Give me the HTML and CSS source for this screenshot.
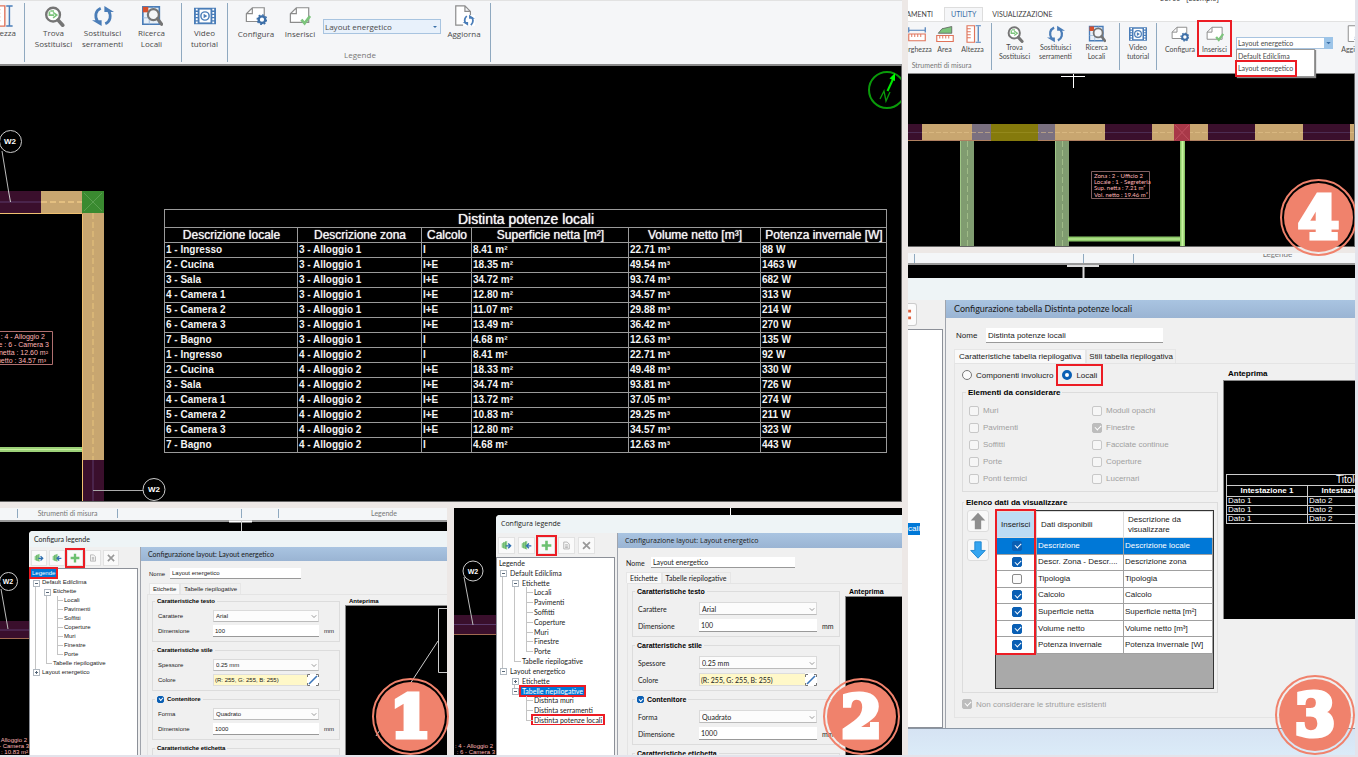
FILE: index.html
```html
<!DOCTYPE html>
<html lang="it">
<head>
<meta charset="utf-8">
<title>Distinta potenze locali</title>
<link rel="stylesheet" href="styles.css">
</head>
<body>
<svg class="defs" aria-hidden="true">
  <symbol id="i-find" viewBox="0 0 24 24"><circle cx="11" cy="10.500" r="7.500" fill="#fff" stroke="#757575" stroke-width="2.600"/><path d="M16.500 16.500l5 5.500" stroke="#757575" stroke-width="4" stroke-linecap="round"/><path d="M7 7v4h5M11 8l4 3-4 3M8 6.500h4" fill="none" stroke="#7cc47c" stroke-width="1.800"/></symbol>
  <symbol id="i-swap" viewBox="0 0 24 24"><path d="M9.500 3.500C4 6 2.500 12 6 18" fill="none" stroke="#4a7db8" stroke-width="3"/><path d="M0 16.500h10.500v6.500z" fill="#4a7db8"/><path d="M14.500 20.500C20 18 21.500 12 18 6" fill="none" stroke="#4a7db8" stroke-width="3"/><path d="M24 7.500h-10.500V1z" fill="#4a7db8"/></symbol>
  <symbol id="i-room" viewBox="0 0 24 24"><path d="M2 2h18v19H2z" fill="#e8f0f8" stroke="#4a7db8" stroke-width="1.800"/><path d="M2 14h7v7M14 2v5" fill="none" stroke="#9ab8d8"/><path d="M2 2h6v6H2z" fill="#d8502c"/><circle cx="13.500" cy="10.500" r="6" fill="#f4f6f8" stroke="#757575" stroke-width="2.400"/><path d="M18 15l4.500 6" stroke="#757575" stroke-width="3.500" stroke-linecap="round"/></symbol>
  <symbol id="i-video" viewBox="0 0 24 24"><path d="M0 3h24v18H0z" fill="#4a7db8"/><path d="M6 5h12v14H6z" fill="#fff"/><path d="M3 4v16M21 4v16" stroke="#fff" stroke-width="2" stroke-dasharray="2 1.500"/><circle cx="12" cy="12" r="4.500" fill="#fff" stroke="#4a7db8" stroke-width="1.600"/><path d="M10.500 9.500v5l4-2.500z" fill="#4a7db8"/></symbol>
  <symbol id="i-conf" viewBox="0 0 24 24"><path d="M8 3h13v15H1.500V9.500zM8 3v6.500H1.500" fill="#fff" stroke="#8c8c8c" stroke-width="1.300"/><circle cx="18.500" cy="16" r="3.600" fill="#fff" stroke="#3d6fa8" stroke-width="2.600"/><circle cx="18.500" cy="16" r="5.200" fill="none" stroke="#3d6fa8" stroke-width="1.500" stroke-dasharray="2 2"/></symbol>
  <symbol id="i-ins" viewBox="0 0 24 24"><path d="M8 3h13.500v16H1.500V9.500zM8 3v6.500H1.500" fill="#fff" stroke="#8c8c8c" stroke-width="1.300"/><path d="M13.500 16l3.500 4 6-8" fill="none" stroke="#7cc47c" stroke-width="3"/></symbol>
  <symbol id="i-upd" viewBox="0 0 24 24"><path d="M3 1h10l6 6v15H3zM13 1v6h6" fill="#fff" stroke="#8c8c8c" stroke-width="1.300"/><path d="M11 11h13v12H11z" fill="#fff"/><path d="M15 12q-4 4-1 8M19.500 22q4-4 1-8.500" fill="none" stroke="#4a7db8" stroke-width="1.900"/><path d="M10.500 18.500h6v4zM24 15h-6.500v-4.500z" fill="#4a7db8"/></symbol>
  <symbol id="i-alt" viewBox="0 0 24 24"><path d="M4 1h10v22H4z" fill="#fff" stroke="#e0735a" stroke-width="1.500"/><path d="M4 5h5M4 9h5M4 13h5M4 17h5" stroke="#e0735a" stroke-width="1.300"/><path d="M19 2v20M15.500 1h7M15.500 23h7" stroke="#4a7db8" stroke-width="1.600"/></symbol>
  <symbol id="i-area" viewBox="0 0 24 24"><path d="M3 11l5-6 13-3v9z" fill="#7cc47c" stroke="#555" stroke-width="1"/><path d="M1 14h22v8H1z" fill="#fff" stroke="#e0735a" stroke-width="1.500"/><path d="M5 14v4M9 14v4M13 14v4M17 14v4" stroke="#e0735a" stroke-width="1.300"/></symbol>
  <symbol id="i-len" viewBox="0 0 24 24"><path d="M1 7h22M1 3v7M23 3v7" stroke="#4a7db8" stroke-width="1.600"/><path d="M1 12h22v9H1z" fill="#fff" stroke="#e0735a" stroke-width="1.500"/><path d="M5 12v4M9 12v4M13 12v4M17 12v4" stroke="#e0735a" stroke-width="1.300"/></symbol>
  <symbol id="i-out" viewBox="0 0 16 16"><path d="M1 5l8-4v13l-8-3z" fill="#8fd08f"/><path d="M4 3v9M6.500 2v11" stroke="#5aa85a"/><path d="M7 8.500h7M10.500 5l3.500 3.500-3.500 3.500" fill="none" stroke="#2f6fb0" stroke-width="2"/></symbol>
  <symbol id="i-in" viewBox="0 0 16 16"><path d="M1 5l8-4v13l-8-3z" fill="#8fd08f"/><path d="M4 3v9M6.500 2v11" stroke="#5aa85a"/><path d="M8 8.500h7M11.500 5L8 8.500l3.500 3.500" fill="none" stroke="#2f6fb0" stroke-width="2"/></symbol>
  <symbol id="i-plus" viewBox="0 0 16 16"><path d="M8 1v14M1 8h14" stroke="#6cc070" stroke-width="3.800"/></symbol>
  <symbol id="i-copy" viewBox="0 0 16 16"><path d="M4 3h5l3 3v7H4zM6 7h4M6 9h4M6 11h4" fill="none" stroke="#b4b4b4" stroke-width="1.400"/></symbol>
  <symbol id="i-x" viewBox="0 0 16 16"><path d="M3 3l10 10M13 3L3 13" stroke="#9a9a9a" stroke-width="2.600"/></symbol>
  <symbol id="i-chev" viewBox="0 0 8 8"><path d="M1 3l3 3 3-3" fill="none" stroke="#777"/></symbol>
  <symbol id="i-tri" viewBox="0 0 8 8"><path d="M2 3h4L4 5z" fill="#3a70a8"/></symbol>
  <symbol id="i-pen" viewBox="0 0 12 12"><path d="M0 0h12v12H0z" fill="#fff"/><path d="M2 10L10 2" stroke="#3a74b8" stroke-width="1.600"/><path d="M.5 3V.5H3M11.500 9v2.500H9M9 .5h2.500V3M.5 9v2.500H3" fill="none" stroke="#777"/></symbol>
</svg>

<main class="board">
  <div class="left">
    <section class="panel panel-main">
      <div class="screen">
        <div class="ribbon">
          <div class="group cut"><button><svg><use href="#i-alt"/></svg>Altezza</button></div>
          <div class="group tools">
            <button><svg><use href="#i-find"/></svg>Trova<br>Sostituisci</button>
            <button><svg><use href="#i-swap"/></svg>Sostituisci<br>serramenti</button>
            <button><svg><use href="#i-room"/></svg>Ricerca<br>Locali</button>
          </div>
          <div class="group video"><button><svg><use href="#i-video"/></svg>Video<br>tutorial</button></div>
          <div class="group legends">
            <div class="row">
              <button class="low"><svg><use href="#i-conf"/></svg>Configura</button>
              <button class="low"><svg><use href="#i-ins"/></svg>Inserisci</button>
              <span class="combo rib-combo"><select aria-label="Layout"><option>Layout energetico</option></select><svg><use href="#i-tri"/></svg></span>
              <button class="low"><svg><use href="#i-upd"/></svg>Aggiorna</button>
            </div>
            <span class="caption">Legende</span>
          </div>
        </div>
        <div class="cad cad-main">
          <svg class="drawing"><g transform="translate(0 -66)">
            <path d="M2 151L9 194" stroke="#bbb"/>
            <rect y="191" width="41" height="22" fill="#3a0f2c"/><path d="M0 202h41" stroke="#5a3a6a"/><path d="M8.500 191l2 11" stroke="#ccc"/>
            <rect x="41" y="191" width="41" height="22" fill="#c8a670"/><path d="M41 202h41" stroke="#ffd890" stroke-dasharray="6 3"/>
            <path d="M0 213.500h82.500V501" fill="none" stroke="#f0c070"/>
            <rect x="83" y="213" width="21" height="247" fill="#c8a670"/><path d="M93 213V460" stroke="#e8c47c" stroke-dasharray="6 3"/>
            <rect x="82" y="191" width="22" height="22" fill="#3a8a30"/><path d="M84 193l18 18M102 193l-18 18" stroke="#5aa050"/>
            <rect x="83" y="460" width="21" height="42" fill="#3a0f2c"/><path d="M93 460v41" stroke="#5a3a6a"/>
            <path d="M0 449.500h82" stroke="#9cd078" stroke-width="5"/><path d="M0 449.500h82" stroke="#c8f0a0"/>
            <path d="M93 490.500h50" stroke="#aaa"/>
            <circle cx="10.500" cy="141.500" r="11" class="ring"/><circle cx="154" cy="489.500" r="11" class="ring"/>
            <text x="10" y="144" class="w2">W2</text><text x="154" y="492" class="w2">W2</text>
            <path d="M0 331.500h52.500v33H0" fill="none" stroke="#b07070"/>
            <g class="tag tag-end"><text x="45" y="339">Zona : 4 - Alloggio 2</text><text x="49" y="347">Locale : 6 - Camera 3</text><text x="48" y="355">Sup. netta : 12.60 m²</text><text x="46" y="363">Vol. netto : 34.57 m³</text></g>
          </g></svg>
          <svg class="compass" viewBox="0 0 34 42"><circle cx="20" cy="21" r="18" fill="none" stroke="#0a9a0a" stroke-width="2"/><path d="M20.500 22L27 8" stroke="#00e800" stroke-width="2"/><path d="M28 4l-5.500 5.500 5.500 2.500z" fill="#00ff00"/><path d="M13 30l4-8 2 10 4-9" fill="none" stroke="#0a9a0a" stroke-width="1.300"/></svg>
          <table class="rooms">
            <colgroup><col class="c1"><col class="c2"><col class="c3"><col class="c4"><col class="c5"><col class="c6"></colgroup>
            <thead>
              <tr class="title"><th colspan="6">Distinta potenze locali</th></tr>
              <tr><th>Descrizione locale</th><th>Descrizione zona</th><th>Calcolo</th><th>Superficie netta [m²]</th><th>Volume netto [m³]</th><th>Potenza invernale [W]</th></tr>
            </thead>
            <tbody>
              <tr><td>1 - Ingresso</td><td>3 - Alloggio 1</td><td>I</td><td>8.41 m²</td><td>22.71 m³</td><td>88 W</td></tr>
              <tr><td>2 - Cucina</td><td>3 - Alloggio 1</td><td>I+E</td><td>18.35 m²</td><td>49.54 m³</td><td>1463 W</td></tr>
              <tr><td>3 - Sala</td><td>3 - Alloggio 1</td><td>I+E</td><td>34.72 m²</td><td>93.74 m³</td><td>682 W</td></tr>
              <tr><td>4 - Camera 1</td><td>3 - Alloggio 1</td><td>I+E</td><td>12.80 m²</td><td>34.57 m³</td><td>313 W</td></tr>
              <tr><td>5 - Camera 2</td><td>3 - Alloggio 1</td><td>I+E</td><td>11.07 m²</td><td>29.88 m³</td><td>214 W</td></tr>
              <tr><td>6 - Camera 3</td><td>3 - Alloggio 1</td><td>I+E</td><td>13.49 m²</td><td>36.42 m³</td><td>270 W</td></tr>
              <tr><td>7 - Bagno</td><td>3 - Alloggio 1</td><td>I</td><td>4.68 m²</td><td>12.63 m³</td><td>135 W</td></tr>
              <tr><td>1 - Ingresso</td><td>4 - Alloggio 2</td><td>I</td><td>8.41 m²</td><td>22.71 m³</td><td>92 W</td></tr>
              <tr><td>2 - Cucina</td><td>4 - Alloggio 2</td><td>I+E</td><td>18.33 m²</td><td>49.48 m³</td><td>330 W</td></tr>
              <tr><td>3 - Sala</td><td>4 - Alloggio 2</td><td>I+E</td><td>34.74 m²</td><td>93.81 m³</td><td>726 W</td></tr>
              <tr><td>4 - Camera 1</td><td>4 - Alloggio 2</td><td>I+E</td><td>13.72 m²</td><td>37.05 m³</td><td>274 W</td></tr>
              <tr><td>5 - Camera 2</td><td>4 - Alloggio 2</td><td>I+E</td><td>10.83 m²</td><td>29.25 m³</td><td>211 W</td></tr>
              <tr><td>6 - Camera 3</td><td>4 - Alloggio 2</td><td>I+E</td><td>12.80 m²</td><td>34.57 m³</td><td>323 W</td></tr>
              <tr><td>7 - Bagno</td><td>4 - Alloggio 2</td><td>I</td><td>4.68 m²</td><td>12.63 m³</td><td>443 W</td></tr>
            </tbody>
          </table>
        </div>
      </div>
    </section>

    <div class="steps">
      <section class="panel">
        <div class="screen step step-1">
          <div class="strip"><span class="s-0"></span><span class="s-a">Strumenti di misura</span><span class="s-b"></span><span class="s-c"></span><span class="s-d">Legende</span></div>
          <svg class="drawing"><g transform="translate(0 -508)">
            <path d="M229 521.500h23" stroke="#fff" stroke-width="2"/><path d="M241.500 521v10" stroke="#ccc"/>
            <rect y="621" width="29" height="17" fill="#3a0f2c"/><path d="M0 630h29" stroke="#5a3a6a"/><path d="M0 638.500h29" stroke="#a06a50"/>
            <path d="M1 589l7 40" stroke="#bbb"/><circle cx="8.500" cy="581.500" r="9" class="ring"/><text x="8" y="584" class="w2 small">W2</text>
            <g class="tag tag-end"><text x="27" y="742">4 - Alloggio 2</text><text x="29" y="748">- Camera 3</text><text x="28" y="754">: 10.83 m²</text></g>
          </g></svg>
          <div class="dialog">
            <header>Configura legende</header>
            <div class="cols">
              <div class="side">
                <div class="bar"><button aria-label="Esporta"><svg><use href="#i-out"/></svg></button><button aria-label="Importa"><svg><use href="#i-in"/></svg></button><button class="mark" aria-label="Aggiungi"><svg><use href="#i-plus"/></svg></button><button aria-label="Copia"><svg><use href="#i-copy"/></svg></button><button aria-label="Elimina"><svg><use href="#i-x"/></svg></button></div>
                <ul class="tree">
                  <li><b class="sel mark">Legende</b></li>
                  <li><i class="m first"></i>Default Edilclima</li>
                  <li><i class="v"></i><i class="m first"></i>Etichette</li>
                  <li><i class="v"></i><i class="v"></i><i class="t"></i>Locali</li>
                  <li><i class="v"></i><i class="v"></i><i class="t"></i>Pavimenti</li>
                  <li><i class="v"></i><i class="v"></i><i class="t"></i>Soffitti</li>
                  <li><i class="v"></i><i class="v"></i><i class="t"></i>Coperture</li>
                  <li><i class="v"></i><i class="v"></i><i class="t"></i>Muri</li>
                  <li><i class="v"></i><i class="v"></i><i class="t"></i>Finestre</li>
                  <li><i class="v"></i><i class="v"></i><i class="e"></i>Porte</li>
                  <li><i class="v"></i><i class="e"></i>Tabelle riepilogative</li>
                  <li><i class="p last"></i>Layout energetico</li>
                </ul>
              </div>
              <div class="work">
                <h2>Configurazione layout: Layout energetico</h2>
                <form>
                  <label class="name">Nome <input value="Layout energetico"></label>
                  <div class="tabs"><button type="button" class="on">Etichette</button><button type="button">Tabelle riepilogative</button></div>
                  <div class="page">
                    <div class="sets">
                      <fieldset><legend>Caratteristiche testo</legend>
                        <label for="a1">Carattere</label><span class="combo"><select id="a1"><option>Arial</option></select><svg><use href="#i-chev"/></svg></span><span></span>
                        <label for="a2">Dimensione</label><input id="a2" value="100"><span>mm</span></fieldset>
                      <fieldset><legend>Caratteristiche stile</legend>
                        <label for="a3">Spessore</label><span class="combo"><select id="a3"><option>0.25 mm</option></select><svg><use href="#i-chev"/></svg></span><span></span>
                        <label for="a4">Colore</label><span class="color"><input id="a4" value="(R: 255, G: 255, B: 255)"><button type="button" aria-label="Scegli colore"><svg viewBox="0 0 12 12"><use href="#i-pen"/></svg></button></span><span></span></fieldset>
                      <fieldset><legend><label><input type="checkbox" checked> Contenitore</label></legend>
                        <label for="a5">Forma</label><span class="combo"><select id="a5"><option>Quadrato</option></select><svg><use href="#i-chev"/></svg></span><span></span>
                        <label for="a6">Dimensione</label><input id="a6" value="1000"><span>mm</span></fieldset>
                      <fieldset><legend>Caratteristiche etichetta</legend><span></span></fieldset>
                    </div>
                    <div class="preview"><h3>Anteprima</h3><div class="black"><svg><path d="M102 2.500H92.500v64H102M92 35L30 130" fill="none" stroke="#ccc"/></svg></div></div>
                  </div>
                </form>
              </div>
            </div>
          </div>
        </div>
        <span class="badge b1">1</span>
      </section>

      <section class="panel">
        <div class="screen step step-2">
          <svg class="drawing"><g transform="translate(-454 -508)">
            <path d="M730.500 508v8" stroke="#fff"/>
            <rect x="454" y="615" width="43" height="19" fill="#3a0f2c"/><path d="M454 624.500h43" stroke="#5a3a6a"/><path d="M454 634.500h43" stroke="#a06a50"/>
            <path d="M464 577l9 48" stroke="#bbb"/><circle cx="473" cy="571" r="10" class="ring"/><text x="473" y="574" class="w2 small">W2</text>
            <g class="tag tag-end"><text x="493" y="748">: 4 - Alloggio 2</text><text x="495" y="754">: 6 - Camera 3</text></g>
          </g></svg>
          <div class="dialog">
            <header>Configura legende</header>
            <div class="cols">
              <div class="side">
                <div class="bar"><button aria-label="Esporta"><svg><use href="#i-out"/></svg></button><button aria-label="Importa"><svg><use href="#i-in"/></svg></button><button class="mark" aria-label="Aggiungi"><svg><use href="#i-plus"/></svg></button><button aria-label="Copia"><svg><use href="#i-copy"/></svg></button><button aria-label="Elimina"><svg><use href="#i-x"/></svg></button></div>
                <ul class="tree">
                  <li><b>Legende</b></li>
                  <li><i class="m first"></i>Default Edilclima</li>
                  <li><i class="v"></i><i class="m first"></i>Etichette</li>
                  <li><i class="v"></i><i class="v"></i><i class="t"></i>Locali</li>
                  <li><i class="v"></i><i class="v"></i><i class="t"></i>Pavimenti</li>
                  <li><i class="v"></i><i class="v"></i><i class="t"></i>Soffitti</li>
                  <li><i class="v"></i><i class="v"></i><i class="t"></i>Coperture</li>
                  <li><i class="v"></i><i class="v"></i><i class="t"></i>Muri</li>
                  <li><i class="v"></i><i class="v"></i><i class="t"></i>Finestre</li>
                  <li><i class="v"></i><i class="v"></i><i class="e"></i>Porte</li>
                  <li><i class="v"></i><i class="e"></i>Tabelle riepilogative</li>
                  <li><i class="m last"></i>Layout energetico</li>
                  <li><i></i><i class="p first"></i>Etichette</li>
                  <li><i></i><i class="m last"></i><b class="sel mark">Tabelle riepilogative</b></li>
                  <li><i></i><i></i><i class="t"></i>Distinta muri</li>
                  <li><i></i><i></i><i class="t"></i>Distinta serramenti</li>
                  <li><i></i><i></i><i class="e"></i><b class="mark">Distinta potenze locali</b></li>
                </ul>
              </div>
              <div class="work">
                <h2>Configurazione layout: Layout energetico</h2>
                <form>
                  <label class="name">Nome <input value="Layout energetico"></label>
                  <div class="tabs"><button type="button" class="on">Etichette</button><button type="button">Tabelle riepilogative</button></div>
                  <div class="page">
                    <div class="sets">
                      <fieldset><legend>Caratteristiche testo</legend>
                        <label for="b1">Carattere</label><span class="combo"><select id="b1"><option>Arial</option></select><svg><use href="#i-chev"/></svg></span><span></span>
                        <label for="b2">Dimensione</label><input id="b2" value="100"><span>mm</span></fieldset>
                      <fieldset><legend>Caratteristiche stile</legend>
                        <label for="b3">Spessore</label><span class="combo"><select id="b3"><option>0.25 mm</option></select><svg><use href="#i-chev"/></svg></span><span></span>
                        <label for="b4">Colore</label><span class="color"><input id="b4" value="(R: 255, G: 255, B: 255)"><button type="button" aria-label="Scegli colore"><svg viewBox="0 0 12 12"><use href="#i-pen"/></svg></button></span><span></span></fieldset>
                      <fieldset><legend><label><input type="checkbox" checked> Contenitore</label></legend>
                        <label for="b5">Forma</label><span class="combo"><select id="b5"><option>Quadrato</option></select><svg><use href="#i-chev"/></svg></span><span></span>
                        <label for="b6">Dimensione</label><input id="b6" value="1000"><span>mm</span></fieldset>
                      <fieldset><legend>Caratteristiche etichetta</legend><span></span></fieldset>
                    </div>
                    <div class="preview"><h3>Anteprima</h3><div class="black"></div></div>
                  </div>
                </form>
              </div>
            </div>
          </div>
        </div>
        <span class="badge b2">2</span>
      </section>
    </div>
  </div>

  <div class="right">
    <section class="panel panel-4">
      <div class="screen">
        <div class="apptitle"><span>EC700 - [Esempio]</span></div>
        <nav class="menu"><a href="#s" class="m-cut">SERRAMENTI</a><a href="#u" class="on">UTILITY</a><a href="#v">VISUALIZZAZIONE</a></nav>
        <div class="ribbon">
          <div class="group measure">
            <div class="row"><button class="low"><svg><use href="#i-len"/></svg>Larghezza</button><button class="low"><svg><use href="#i-area"/></svg>Area</button><button class="low"><svg><use href="#i-alt"/></svg>Altezza</button></div>
            <span class="caption">Strumenti di misura</span>
          </div>
          <div class="group tools">
            <button><svg><use href="#i-find"/></svg>Trova<br>Sostituisci</button>
            <button><svg><use href="#i-swap"/></svg>Sostituisci<br>serramenti</button>
            <button><svg><use href="#i-room"/></svg>Ricerca<br>Locali</button>
          </div>
          <div class="group video"><button><svg><use href="#i-video"/></svg>Video<br>tutorial</button></div>
          <div class="group legends"><div class="row">
            <button class="low"><svg><use href="#i-conf"/></svg>Configura</button>
            <button class="low mark"><svg><use href="#i-ins"/></svg>Inserisci</button>
            <span class="combo rib-combo"><select aria-label="Layout"><option>Layout energetico</option></select><svg><use href="#i-tri"/></svg>
              <ul class="drop"><li>Default Edilclima</li><li class="mark">Layout energetico</li></ul></span>
            <button class="low"><svg><use href="#i-upd"/></svg>Aggiorna</button>
          </div></div>
        </div>
        <div class="cad">
          <svg class="drawing"><g transform="translate(-908 -74)">
            <path d="M1061 76.500h24M1073.500 74v14" stroke="#fff"/>
            <rect x="908" y="124" width="14" height="17" fill="#3a0f2c"/><rect x="922" y="124" width="50" height="17" fill="#c8a670"/>
            <rect x="972" y="124" width="19" height="17" fill="#7a7080"/><rect x="1038" y="124" width="17" height="17" fill="#7a7080"/><rect x="1055" y="124" width="50" height="17" fill="#c8a670"/>
            <rect x="1105" y="124" width="47" height="17" fill="#3a0f2c"/><rect x="1152" y="124" width="22" height="17" fill="#c8a670"/>
            <rect x="1190" y="124" width="18" height="17" fill="#c8a670"/><rect x="1208" y="124" width="47" height="17" fill="#3a0f2c"/>
            <rect x="1255" y="124" width="48" height="17" fill="#c8a670"/><rect x="1303" y="124" width="47" height="17" fill="#3a0f2c"/><rect x="1350" y="124" width="80" height="17" fill="#c8a670"/>
            <path d="M908 140.500h500" stroke="#b08060"/><path d="M908 132.500h500" stroke="#e8c890" stroke-opacity=".5" stroke-dasharray="5 2"/>
            <rect x="991" y="124" width="47" height="17" fill="#857a0c"/><path d="M991 132.500h47" stroke="#94891c"/>
            <path d="M1105 132.500h47M1208 132.500h47M1303 132.500h47M908 132.500h14" stroke="#4c2c52"/>
            <rect x="1174" y="124" width="16" height="17" fill="#a83848"/><path d="M1175 125l14 15M1189 125l-14 15" stroke="#c05060"/>
            <path d="M967 141v105M1062 141v105" stroke="#809c70" stroke-width="14"/><path d="M967.500 141v105M1062.500 141v105" stroke="#a0bc88" stroke-dasharray="6 3"/><path d="M960.500 141v105M1055.500 141v105" stroke="#a0c888"/>
            <path d="M1068 239h114" stroke="#8cc868" stroke-width="5"/><path d="M1068 239h114" stroke="#c8f4a0"/>
            <path d="M1182.500 141v105" stroke="#8cc868" stroke-width="5"/><path d="M1182.500 141v105" stroke="#c8f4a0" stroke-width="2"/>
            <path d="M1091.500 171.500h58v27h-58z" fill="none" stroke="#806060"/>
            <g class="tag tiny"><text x="1094" y="178">Zona : 2 - Ufficio 2</text><text x="1094" y="184">Locale : 1 - Segreteria</text><text x="1094" y="190">Sup. netta : 7.21 m²</text><text x="1094" y="197">Vol. netto : 19.46 m³</text></g>
          </g></svg>
        </div>
      </div>
      <span class="badge b4">4</span>
    </section>

    <section class="panel panel-3">
      <div class="screen">
        <div class="strip"><span class="s-a"></span><span class="s-b"></span><span class="s-c"></span><span class="s-d">Legende</span></div>
        <div class="sliver"><svg><path d="M159 1h32M175.500 0v13" stroke="#ddd" stroke-width="2"/></svg></div>
        <div class="dialog">
          <header></header>
          <div class="cols">
            <div class="side"><button class="cutbtn" aria-label="Comprimi"><svg viewBox="0 0 8 22"><path d="M0 6h3v3H0zM0 13h3v3H0z" fill="#e0603c"/></svg></button><div class="list"><b class="sel">cali</b></div></div>
            <div class="work">
              <h2>Configurazione tabella Distinta potenze locali</h2>
              <form>
                <label class="name">Nome <input value="Distinta potenze locali"></label>
                <div class="tabs"><button type="button" class="on">Caratteristiche tabella riepilogativa</button><button type="button">Stili tabella riepilogativa</button></div>
                <div class="page">
                  <div class="sets">
                    <div class="radios"><label><input type="radio" name="kind"> Componenti involucro</label><label class="mark"><input type="radio" name="kind" checked> Locali</label></div>
                    <fieldset class="checks"><legend>Elementi da considerare</legend>
                      <label><input type="checkbox" disabled> Muri</label><label><input type="checkbox" disabled> Moduli opachi</label>
                      <label><input type="checkbox" disabled> Pavimenti</label><label><input type="checkbox" disabled checked> Finestre</label>
                      <label><input type="checkbox" disabled> Soffitti</label><label><input type="checkbox" disabled> Facciate continue</label>
                      <label><input type="checkbox" disabled> Porte</label><label><input type="checkbox" disabled> Coperture</label>
                      <label><input type="checkbox" disabled> Ponti termici</label><label><input type="checkbox" disabled> Lucernari</label>
                    </fieldset>
                    <fieldset class="data"><legend>Elenco dati da visualizzare</legend>
                      <div class="data-row">
                      <div class="moves"><button type="button" aria-label="Su"><svg viewBox="0 0 22 22"><path d="M11 2l8 8.500h-4.500V20h-7v-9.500H3z" fill="#8e8e8e"/></svg></button><button type="button" aria-label="Giù"><svg viewBox="0 0 22 22"><path d="M11 20l8-8.500h-4.500V2h-7v9.500H3z" fill="#35a5f0" stroke="#1d86d0"/></svg></button></div>
                      <div class="gridbox">
                        <table class="fields">
                          <colgroup><col class="f1"><col class="f2"><col class="f3"></colgroup>
                          <thead><tr><th>Inserisci</th><th>Dati disponibili</th><th>Descrizione da visualizzare</th></tr></thead>
                          <tbody>
                            <tr class="sel"><td><input type="checkbox" aria-label="Descrizione" checked></td><td>Descrizione</td><td>Descrizione locale</td></tr>
                            <tr><td><input type="checkbox" aria-label="Descr. Zona" checked></td><td>Descr. Zona - Descr....</td><td>Descrizione zona</td></tr>
                            <tr><td><input type="checkbox" aria-label="Tipologia"></td><td>Tipologia</td><td>Tipologia</td></tr>
                            <tr><td><input type="checkbox" aria-label="Calcolo" checked></td><td>Calcolo</td><td>Calcolo</td></tr>
                            <tr><td><input type="checkbox" aria-label="Superficie netta" checked></td><td>Superficie netta</td><td>Superficie netta [m²]</td></tr>
                            <tr><td><input type="checkbox" aria-label="Volume netto" checked></td><td>Volume netto</td><td>Volume netto [m³]</td></tr>
                            <tr><td><input type="checkbox" aria-label="Potenza invernale" checked></td><td>Potenza invernale</td><td>Potenza invernale [W]</td></tr>
                          </tbody>
                        </table>
                        <span class="frame"></span>
                      </div>
                      </div>
                    </fieldset>
                    <label class="exist"><input type="checkbox" disabled checked> Non considerare le strutture esistenti</label>
                  </div>
                  <div class="preview"><h3>Anteprima</h3><div class="black">
                    <table class="sample">
                      <thead><tr><th colspan="3" class="big">Titolo</th></tr><tr><th>Intestazione 1</th><th>Intestazione 2</th><th>Intestazione 3</th></tr></thead>
                      <tbody><tr><td>Dato 1</td><td>Dato 2</td><td>Dato 3</td></tr><tr><td>Dato 1</td><td>Dato 2</td><td>Dato 3</td></tr><tr><td>Dato 1</td><td>Dato 2</td><td>Dato 3</td></tr></tbody>
                    </table>
                  </div></div>
                </div>
              </form>
            </div>
          </div>
          <footer></footer>
        </div>
      </div>
      <span class="badge b3">3</span>
    </section>
  </div>
</main>
</body>
</html>
```
FILE: styles.css
```css
* { box-sizing: border-box; }
body { margin: 0; background: #ede8e6; font-family: "Liberation Sans", Arial, sans-serif; color: #1a1a1a; }
button, input, select { font: inherit; color: inherit; margin: 0; padding: 0; border: 0; background: none; min-width: 0; border-radius: 0; }
ul { margin: 0; padding: 0; list-style: none; }
h2, h3 { margin: 0; font-size: inherit; font-weight: 400; }
.defs { position: absolute; width: 0; height: 0; }

/* board */
.board { display: grid; grid-template-columns: 902fr 447fr; gap: 6px; height: 100vh; min-height: 757px; border: solid #e3e3eb; border-width: 0 3px 2px 0; overflow: hidden; }
.left { display: grid; grid-template-rows: 502fr 247fr; gap: 6px; min-width: 0; min-height: 0; }
.steps { display: grid; grid-template-columns: 447fr 448fr; gap: 7px; min-height: 0; }
.right { display: grid; grid-template-rows: 247fr 502fr; gap: 6px; min-width: 0; min-height: 0; }
.panel { position: relative; min-width: 0; min-height: 0; }
.screen { position: relative; height: 100%; overflow: hidden; display: flex; flex-direction: column; }
.mark { outline: 2px solid #ec1c24; }

/* ribbon */
.ribbon { display: flex; flex: none; height: 66px; background: #f5f6f8; border-top: 1px solid #e2e2e2; border-bottom: 2px solid #8a8a8a; color: #4a4a4a; font: 8px/11px "Open Sans", sans-serif; }
.group { display: flex; flex: none; height: 59px; border-right: 1px solid #8fa9c0; margin-top: 2px; }
.group .row { display: flex; align-items: flex-start; }
.ribbon button { display: flex; flex-direction: column; align-items: center; text-align: center; padding-top: 2px; white-space: nowrap; flex: none; }
.ribbon button svg { width: 22px; height: 22px; flex: none; }
.ribbon .low svg { margin-bottom: 1px; }
.caption { color: #777; text-align: center; }
.combo { position: relative; display: flex; }
.combo select { appearance: none; width: 100%; height: 100%; }
.combo > svg { position: absolute; right: 2px; top: 50%; width: 8px; height: 8px; transform: translateY(-50%); pointer-events: none; }
.rib-combo select { background: #e8f1fb; border: 1px solid #a8c4e0; padding-left: 1px; }
.panel-main .cut { width: 25px; justify-content: flex-end; padding-right: 8px; }
.panel-main .tools { width: 157px; padding-left: 4px; }
.panel-main .tools button { width: 49px; }
.panel-main .video { width: 46px; justify-content: center; }
.panel-main .legends { width: 263px; flex-direction: column; justify-content: space-between; padding-left: 6px; }
.panel-main .legends .row button { width: 44px; }
.panel-main .rib-combo { width: 118px; height: 15px; margin: 16px 1px 0 1px; }
.panel-main .caption { padding: 0 4px 2px 0; }

/* cad canvas */
.cad { position: relative; flex: 1; min-height: 0; background: #000; border-right: 1px solid #666; border-bottom: 1px solid #666; }
.drawing { position: absolute; inset: 0; width: 100%; height: 100%; }
.ring { fill: #000; stroke: #ccc; }
.w2 { fill: #fff; font: bold 8px "Liberation Sans", sans-serif; text-anchor: middle; }
.w2.small { font-size: 7px; }
.tag { fill: #ffb4b4; font: 7px "Liberation Sans", sans-serif; }
.tag-end { text-anchor: end; }
.step .tag { font-size: 6px; }
.tag.tiny { font: 6px Lato, sans-serif; }
.cad-main { padding: 143px 14px 0 164px; }
.compass { position: absolute; right: 0; top: 3px; width: 34px; height: 42px; }
.rooms { position: relative; width: 100%; table-layout: fixed; border-collapse: collapse; color: #f4f4f4; font: bold 10px/12px "Liberation Sans", sans-serif; }
.rooms th, .rooms td { border: 1px solid #9a9a9a; padding: 0 0 0 1px; height: 15px; text-align: left; white-space: nowrap; }
.rooms th { font-weight: 400; font-size: 12px; text-align: center; text-shadow: 0 0 1px #fff; }
.rooms .title th { font-size: 14px; height: 18px; line-height: 16px; }
.c1 { width: 133px; } .c2 { width: 124px; } .c3 { width: 50px; } .c4 { width: 157px; } .c5 { width: 132px; }

/* numbered badges */
.badge { position: absolute; z-index: 2; width: 77px; height: 77px; border: 2px solid #f0826c; border-radius: 50%; padding: 2px; background: #f0826c content-box; display: flex; align-items: center; justify-content: center; color: #fff; font: bold 58px/70px "DejaVu Serif", serif; -webkit-text-stroke: 5px #fff; }
.b1 { right: -2px; bottom: 0; } .b2 { right: 2px; bottom: 0; } .b3 { right: 0; bottom: 0; width: 80px; height: 80px; } .b4 { right: -2px; bottom: -9px; }

/* strips of the ribbon */
.strip { display: flex; flex: none; height: 14px; background: #f4f6f8; border-bottom: 2px solid #999; color: #777; font: 7px/8px Lato, sans-serif; }
.strip span { border-right: 1px solid #8fa9c0; height: 9px; margin-top: 1px; text-align: center; }
.strip .s-d { flex: 1; border: 0; }
.step-1 .s-0 { width: 18px; }
.step-1 .s-a { width: 100px; } .step-1 .s-b { width: 124px; } .step-1 .s-c { width: 37px; } .step-1 .s-d { margin-right: -42px; }

/* dialogs */
.dialog { position: relative; flex: 1; min-height: 0; display: flex; flex-direction: column; background: #f0f0f0; font-size: var(--f); overflow: hidden; }
.dialog header { flex: none; height: var(--head); background: #eef4f6; padding-left: 5px; font: 7px/var(--head) var(--ui), sans-serif; }
.cols { flex: 1; display: flex; gap: 2px; min-height: 0; }
.side { flex: none; width: var(--side); display: flex; flex-direction: column; }
.work { flex: 1; min-width: 0; border-left: 1px solid #a0a4ac; display: flex; flex-direction: column; }
.work h2 { flex: none; height: var(--bar); background: linear-gradient(#a9c4e1, #9ab4d3); padding-left: 7px; font: var(--h)/var(--bar) var(--ui), sans-serif; white-space: nowrap; }
.work form { flex: 1; min-height: 0; display: flex; flex-direction: column; }
.step { background: #000; --chk: 7px; --h: 7px; }
.step-1 { --ui: Lato; --f: 6px; --head: 16px; --side: 109px; --bar: 14px; --tool: 21px; --btn: 16px; --cell: 11px; --row: 12px; --gap: 3px; --label: 55px; --field: 106px; --sets: 188px; --namecol: 21px; --namew: 131px; --top: 7px; --leg: 8px; --pad: 5px; --page: 6px; }
.step-2 { --ui: "Open Sans"; --f: 7px; --head: 18px; --side: 119px; --bar: 15px; --tool: 24px; --btn: 17px; --cell: 12px; --row: 13px; --gap: 4px; --label: 61px; --field: 118px; --sets: 208px; --namecol: 25px; --namew: 144px; --top: 9px; --leg: 9px; --pad: 6px; --page: 9px; }
.step-2 .work, .step-2 .tree { font-family: Lato, sans-serif; }
.step-1 .dialog { margin: 9px 0 0 29px; border-top-left-radius: 4px; }
.step-2 .dialog { margin: 7px 0 0 42px; border-top-left-radius: 4px; }
.bar { flex: none; height: var(--tool); display: flex; align-items: center; gap: 2px; padding-left: 2px; }
.bar button { width: var(--btn); height: var(--btn); background: #fafafa; border: 1px solid #e2e2e2; display: flex; align-items: center; justify-content: center; }
.bar svg { width: 10px; height: 10px; }
.step-2 .bar { gap: 3px; } .step-2 .bar svg { width: 11px; height: 11px; }
.tree { flex: none; background: #fff; border: 1px solid #8c9098; border-bottom: 0; display: grid; grid-auto-rows: 1fr; white-space: nowrap; }
.step .side::after { content: ""; flex: 1; background: #fff; border: solid #8c9098; border-width: 0 1px; }
.step-1 .tree { height: 108px; } .step-2 .tree { height: 168px; }
.tree li { display: flex; align-items: center; min-height: 0; }
.tree b { font-weight: 400; padding: 0 1px; line-height: 8px; margin-left: 1px; }
.tree li i + b { margin-left: -1px; }
.sel { background: #0078d7; color: #fff; }
.tree i { position: relative; flex: none; width: var(--cell); height: 100%; margin-right: 1px; }
.tree i + i { margin-left: -1px; }
.tree i::before { content: ""; position: absolute; left: 5px; top: 0; bottom: 0; border-left: 1px solid #c4c4c4; }
.tree i:not([class])::before { display: none; }
.tree .t::after, .tree .e::after { content: ""; position: absolute; left: 5px; right: 0; top: 50%; border-top: 1px solid #c4c4c4; }
.tree .e::before, .tree .last::before { bottom: 50%; }
.tree .first::before { top: 50%; }
.tree .m::after, .tree .p::after { content: ""; position: absolute; left: 3px; top: 2px; width: 5px; height: 5px; border: 1px solid #b0b8c0; background: linear-gradient(#567, #567) center / 3px 1px no-repeat #fff; }
.tree .p::after { background: linear-gradient(#567, #567) center / 3px 1px no-repeat, linear-gradient(#567, #567) center / 1px 3px no-repeat #fff; }
.name { display: grid; grid-template-columns: var(--namecol) var(--namew); align-items: center; margin: var(--top) 0 0 8px; height: 11px; }
.name input, fieldset > input { background: #fff; border-bottom: 1px solid #999; height: 100%; padding-left: 2px; }
.tabs { display: flex; margin: 4px 0 0 8px; height: 11px; }
.tabs button { padding: 0 3px; border: 1px solid #e6e6e6; border-bottom: 0; white-space: nowrap; }
.tabs .on { background: #f9f9f9; }
.page { flex: 1; min-height: 0; display: flex; gap: 5px; margin-left: var(--page); border: solid #e4e4e4; border-width: 1px 0 0 1px; padding: 3px 0 0 4px; }
.step-1 .page { padding-top: 2px; }
.sets { flex: none; width: var(--sets); display: flex; flex-direction: column; gap: 4px; }
fieldset { flex: none; min-width: 0; margin: 0; border: 1px solid #dcdcdc; padding: var(--pad) 0 4px 5px; display: grid; grid-template-columns: var(--label) var(--field) 1fr; grid-auto-rows: var(--row); row-gap: var(--gap); align-items: center; }
legend, h3 { font-family: "Liberation Sans", sans-serif; font-weight: 700; padding: 0 2px; height: var(--leg); line-height: var(--leg); color: #000; }
legend { margin-left: -3px; }
.step .preview h3 { padding-left: 4px; }
fieldset > span:not(.combo):not(.color) { padding-left: 5px; }
.dialog .combo, .color { height: 100%; background: #fcfcfc; }
.dialog .combo select { border: 1px solid #dadada; border-bottom-color: #bbb; padding-left: 2px; }
.dialog .combo > svg { right: 2px; width: 6px; height: 6px; }
.color { display: flex; align-items: center; }
.color input { flex: 1; background: #fff8c8; border: 1px solid #ddd; border-right: 0; padding-left: 1px; height: 100%; }
.color button { flex: none; width: 12px; height: 12px; }
.color svg { width: 12px; height: 12px; display: block; }
input[type=checkbox] { appearance: none; position: relative; width: var(--chk); height: var(--chk); border: 1px solid #8a8a8a; border-radius: 2px; background: #fbfbfb; flex: none; vertical-align: middle; }
input[type=checkbox]:checked { background: #0a5fb4; border-color: #0a5fb4; }
input[type=checkbox]:disabled { border-color: #c8c8c8; background: #f6f6f6; }
input[type=checkbox]:disabled:checked { background: #bdbdbd; border-color: #bdbdbd; }
input[type=checkbox]:checked::after { content: ""; position: absolute; left: 22%; top: 15%; width: 60%; height: 35%; border: solid #fff; border-width: 0 0 1px 1px; transform: rotate(-45deg); }
legend label { display: flex; gap: 3px; align-items: center; height: 100%; }
.preview { flex: 1; min-width: 0; display: flex; flex-direction: column; overflow: hidden; }
.black { flex: 1; background: #000; border-left: 1px solid #888; border-top: 1px solid #888; overflow: hidden; }
.black > svg { width: 200px; height: 180px; display: block; }

/* utility window */
.apptitle { flex: none; height: 7px; background: #fff; position: relative; font: 7px/8px "Open Sans", sans-serif; }
.apptitle span { position: absolute; top: -5px; left: 252px; }
.menu { flex: none; display: flex; height: 14px; background: #fff; font: 7px/13px Lato, sans-serif; }
.menu a { color: #444; text-decoration: none; white-space: nowrap; padding: 0 6px; border: 1px solid transparent; }
.menu a.on { color: #3a6ea5; background: #f5f6f8; border-color: #ddd; border-bottom: 0; }
.menu .m-cut { width: 36px; display: flex; justify-content: flex-end; padding-right: 10px; }
.menu a:last-child { margin-left: 2px; }
.panel-4 .ribbon { height: 53px; border-bottom-width: 1px; font: 7px/9px Lato, sans-serif; position: relative; z-index: 1; }
.panel-4 .group { height: 47px; margin-top: 1px; }
.panel-4 .ribbon button svg { width: 18px; height: 18px; }
.panel-4 .ribbon .low svg { margin-bottom: 2px; }
.panel-4 .measure { width: 84px; flex-direction: column; justify-content: space-between; }
.measure .row button { width: 27px; }
.measure .row { margin-left: -5px; gap: 1px; }
.panel-4 .caption { padding-right: 16px; }
.panel-4 .tools { width: 128px; padding-left: 2px; }
.panel-4 .tools button { width: 41px; }
.panel-4 .video { width: 37px; justify-content: center; }
.panel-4 .legends { border: 0; padding-left: 5px; }
.panel-4 .legends button { width: 36px; }
.panel-4 .legends button.mark { width: 31px; height: 33px; margin: -1px 1px 0; padding-top: 3px; }
.panel-4 .rib-combo { width: 97px; height: 12px; margin: 14px 4px 0 5px; }
.panel-4 .rib-combo select { background: #fff; }
.panel-4 .rib-combo > svg { right: 0; width: 9px; height: 12px; background: #9cc4e8; }
.drop { position: absolute; left: 0; top: 12px; width: 79px; height: 28px; background: #fff; border: 1px solid #999; box-shadow: 1px 1px 1px #888; line-height: 12px; }
.drop li { height: 12px; padding-left: 1px; }
.drop .mark { width: 58px; height: 13px; white-space: nowrap; }

/* table configuration window */
.panel-3 .screen { --ui: Lato; --f: 8px; --h: 9px; --head: 22px; --side: 35px; --bar: 18px; --chk: 10px; --namecol: 30px; --namew: 177px; --top: 10px; --leg: 9px; --sets: 256px; }
.panel-3 .strip { height: 12px; }
.panel-3 .strip .s-a { width: 7px; } .panel-3 .strip .s-b { width: 169px; } .panel-3 .strip .s-c { width: 50px; }
.panel-3 .strip .s-d { padding-left: 66px; font-size: 8px; line-height: 0; overflow: hidden; }
.sliver { flex: none; height: 13px; background: #000; }
.sliver svg { display: block; width: 100%; height: 13px; }
.panel-3 .cutbtn { flex: none; width: 9px; height: 23px; margin: 3px 0; background: #fcfcfc; border: 1px solid #ccc; border-left: 0; border-radius: 0 3px 3px 0; }
.cutbtn svg { width: 8px; height: 21px; display: block; }
.list { flex: 1; background: #fff; border: 1px solid #8c9098; border-left: 0; padding-top: 193px; }
.list b { font-weight: 400; display: inline-block; height: 12px; line-height: 12px; }
.panel-3 .cols { border-bottom: 1px solid #8a96a4; }
.panel-3 .work h2 { padding-left: 8px; }
.panel-3 .name { height: 15px; margin-left: 10px; }
.panel-3 .tabs { height: 14px; margin-top: 6px; }
.panel-3 .tabs button { padding: 0 4px; }
.panel-3 .tabs button + button { padding: 0 2px; }
.panel-3 .page { gap: 4px; margin: 0 0 10px 8px; border-bottom-width: 1px; padding: 2px 0 6px 7px; }
.panel-3 .sets { gap: 0; }
.radios { display: flex; height: 18px; gap: 5px; }
.radios label { display: flex; align-items: center; gap: 4px; }
.radios .mark { padding: 0 4px 0 4px; }
input[type=radio] { appearance: none; width: 10px; height: 10px; border: 1px solid #777; border-radius: 50%; background: #fbfbfb; }
input[type=radio]:checked { border: 3px solid #0a5fb4; background: #fff; }
.panel-3 .checks { grid-template-columns: 123px 1fr; grid-auto-rows: 17px; row-gap: 0; padding: 5px 0 4px 6px; margin-top: 4px; color: #a0a0a0; }
.checks label, .exist { display: flex; align-items: center; gap: 4px; }
.panel-3 .data { display: block; margin-top: 6px; padding: 3px 3px 3px 4px; }
.data-row { display: flex; gap: 6px; }
.moves { display: flex; flex-direction: column; gap: 7px; }
.moves button { width: 22px; height: 22px; background: #f8f8f8; border: 1px solid #ddd; border-radius: 3px; }
.moves svg { width: 20px; height: 20px; display: block; }
.gridbox { position: relative; flex: 1; height: 179px; background: #a9a9a9; border: 1px solid #333; }
.fields { width: 100%; height: 143px; table-layout: fixed; border-collapse: collapse; background: #fff; }
.fields th, .fields td { border: 1px solid #a0a0a0; padding: 0 0 0 1px; text-align: left; font-weight: 400; white-space: nowrap; line-height: 10px; height: 16px; }
.fields th { height: 26px; white-space: normal; padding-left: 4px; border-color: #ddd; }
.fields th:first-child { background: #bcdcf4; }
.fields td:first-child { text-align: center; line-height: 0; }
.f1 { width: 40px; } .f2 { width: 87px; }
.frame { position: absolute; left: -1px; top: -2px; width: 41px; height: 146px; border: 2px solid #ec1c24; }
.exist { margin-top: 6px; color: #a0a0a0; }
.panel-3 .preview { padding-top: 3px; }
.panel-3 .preview h3 { padding-left: 6px; }
.panel-3 .black { flex: none; height: 239px; margin: 2px 0 0 1px; padding: 93px 0 0 2px; }
.sample { width: 244px; table-layout: fixed; border-collapse: collapse; color: #fff; font: 8px/8px "Liberation Sans", sans-serif; }
.sample th, .sample td { border: 1px solid #ccc; padding: 0 1px; height: 9px; text-align: left; }
.sample th { height: 11px; text-align: center; }
.sample .big { font-size: 10px; font-weight: 400; }
.panel-3 footer { flex: none; height: 26px; background: linear-gradient(#d6e3f3, #dbebf8); }
```
